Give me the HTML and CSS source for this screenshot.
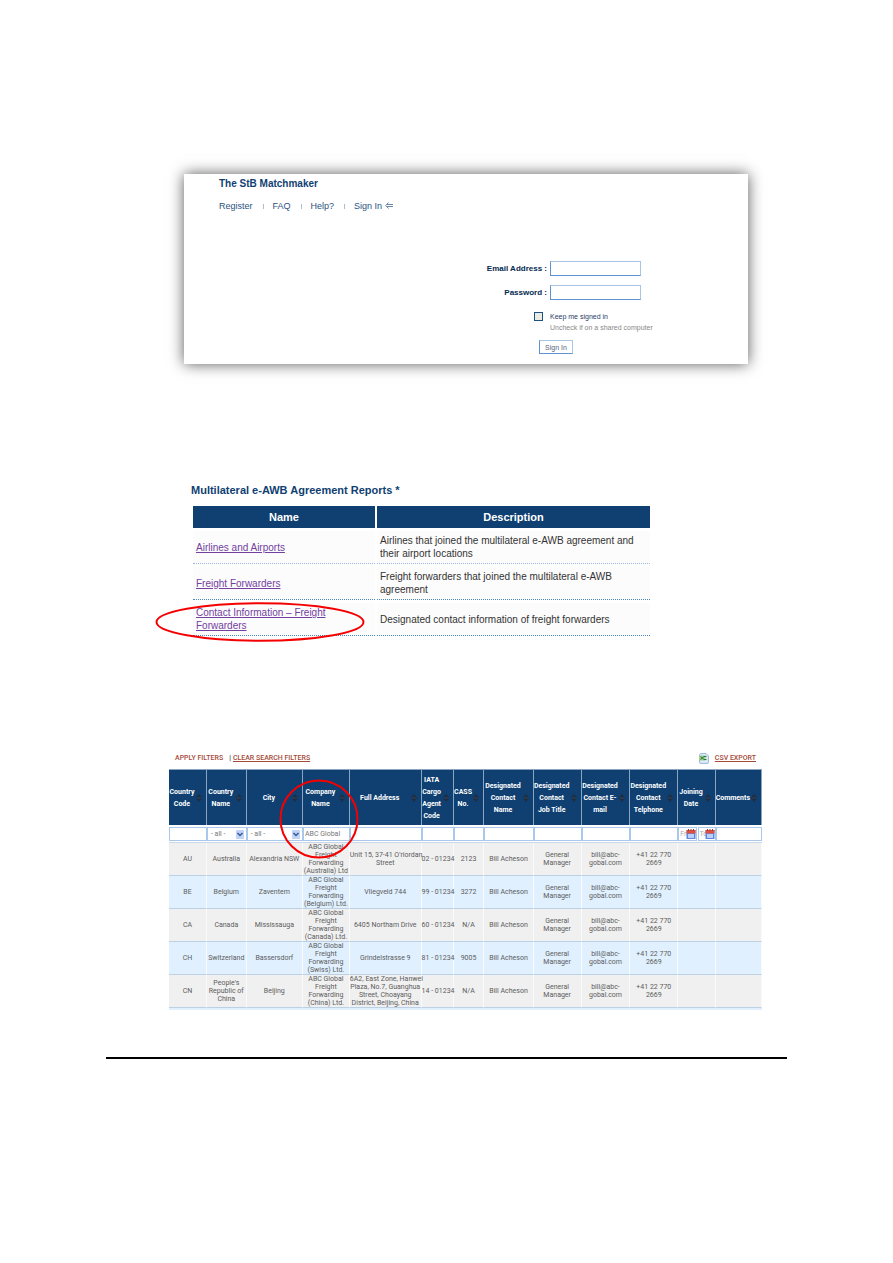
FILE: index.html
```
<!DOCTYPE html>
<html lang="en">
<head>
<meta charset="utf-8">
<title>The StB Matchmaker</title>
<link rel="stylesheet" href="styles.css">
</head>
<body>
<svg class="defs" width="0" height="0" aria-hidden="true">
  <symbol id="sort" viewBox="0 0 6 8"><path d="M3 0 6 3.500H0zM3 8 0 4.500h6z" fill="#1f2f42"/><path d="M1 3h4v2H1z" fill="#263a52"/></symbol>
  <symbol id="arrow" viewBox="0 0 8 9"><rect width="8" height="9" rx="1" fill="#bfd2f8"/><path d="M1.500 3 4 5.500 6.500 3" fill="none" stroke="#3d5a94" stroke-width="1.500"/></symbol>
  <symbol id="cal" viewBox="0 0 10 10"><rect x="0.500" y="1" width="9" height="9" fill="#5f86e0"/><rect x="0.500" y="1" width="9" height="3.500" fill="#e0503f"/><path d="M2.500 0v2M5 0v2M7.500 0v2" stroke="#9a3a3a" stroke-width="1"/><rect x="2" y="5" width="6" height="4" fill="#b9d0fa"/></symbol>
</svg>
<main class="page">
  <section class="card">
    <h1 class="brand">The StB Matchmaker</h1>
    <nav class="nav">
      <a href="#">Register</a><i class="sep"></i><a href="#">FAQ</a><i class="sep"></i><a href="#">Help?</a><i class="sep"></i><a href="#">Sign In
        <svg class="back" viewBox="0 0 8 7" aria-hidden="true"><path d="M3.500 0.500 0.700 3.500 3.500 6.500M2 2.500h6M2 4.500h6" fill="none" stroke="#47678f" stroke-width="0.800"/></svg></a>
    </nav>
    <form class="login">
      <label for="email">Email Address :</label><input class="box" id="email" type="text">
      <label for="pass">Password :</label><input class="box" id="pass" type="password">
      <input class="check" id="keep" type="checkbox">
      <div class="keep"><label for="keep">Keep me signed in</label><p>Uncheck if on a shared computer</p></div>
      <button class="signin" type="button">Sign In</button>
    </form>
  </section>

  <section class="reports">
    <h2 class="reports-title">Multilateral e-AWB Agreement Reports *</h2>
    <table class="list">
      <colgroup><col class="name"><col></colgroup>
      <thead><tr><th>Name</th><th>Description</th></tr></thead>
      <tbody>
        <tr><td><a href="#">Airlines and Airports</a></td><td>Airlines that joined the multilateral e-AWB agreement and<br>their airport locations</td></tr>
        <tr><td><a href="#">Freight Forwarders</a></td><td>Freight forwarders that joined the multilateral e-AWB<br>agreement</td></tr>
        <tr><td class="marked"><a href="#">Contact Information – Freight<br>Forwarders</a>
          <svg class="oval" viewBox="0 0 210 40" aria-hidden="true"><ellipse cx="105" cy="20" rx="103.500" ry="18.800" fill="none" stroke="#f50000" stroke-width="2"/></svg></td><td>Designated contact information of freight forwarders</td></tr>
      </tbody>
    </table>
  </section>

  <section class="contacts">
    <div class="toolbar">
      <a href="#">APPLY FILTERS</a><span class="bar">|</span><a class="under" href="#">CLEAR SEARCH FILTERS</a>
      <a class="export" href="#"><svg viewBox="0 0 10 11" aria-hidden="true"><path d="M1.500 0.500H7L9.500 3v6a1.500 1.500 0 0 1-1.500 1.500H2A1.500 1.500 0 0 1 .5 9V2z" fill="#d9e9f8" stroke="#86acd8" stroke-width="0.800"/><rect y="2.500" width="6.500" height="5" fill="#9fcf93"/><path d="M1.500 3.500l3.500 3M5 3.500l-3.500 3M5 3.500h2.500M5 6.500h2.500" stroke="#2c7a35" stroke-width="1"/></svg><span class="under">CSV EXPORT</span></a>
    </div>
    <table class="grid">
      <colgroup><col style="width:6.400%"><col style="width:6.700%"><col style="width:9.500%"><col style="width:7.900%"><col style="width:12.100%"><col style="width:5.400%"><col style="width:5.200%"><col style="width:8.300%"><col style="width:8.100%"><col style="width:8.200%"><col style="width:8.100%"><col style="width:6.300%"><col style="width:7.800%"></colgroup>
      <thead>
        <tr>
          <th>Country<br>Code<svg class="sort"><use href="#sort"/></svg></th>
          <th>Country<br>Name<svg class="sort"><use href="#sort"/></svg></th>
          <th>City<svg class="sort"><use href="#sort"/></svg></th>
          <th>Company<br>Name<svg class="sort"><use href="#sort"/></svg>
            <svg class="circle" viewBox="0 0 80 80" aria-hidden="true"><circle cx="40" cy="40" r="38.500" fill="none" stroke="#f50000" stroke-width="2"/></svg></th>
          <th>Full Address<svg class="sort"><use href="#sort"/></svg></th>
          <th>IATA<br>Cargo<br>Agent<br>Code<svg class="sort"><use href="#sort"/></svg></th>
          <th>CASS<br>No.<svg class="sort"><use href="#sort"/></svg></th>
          <th>Designated<br>Contact<br>Name<svg class="sort"><use href="#sort"/></svg></th>
          <th>Designated<br>Contact<br>Job Title<svg class="sort"><use href="#sort"/></svg></th>
          <th>Designated<br>Contact E-<br>mail<svg class="sort"><use href="#sort"/></svg></th>
          <th>Designated<br>Contact<br>Telphone<svg class="sort"><use href="#sort"/></svg></th>
          <th>Joining<br>Date<svg class="sort"><use href="#sort"/></svg></th>
          <th>Comments<svg class="sort"><use href="#sort"/></svg></th>
        </tr>
        <tr class="filters">
          <td><input type="text" aria-label="Country code"></td>
          <td><div class="pick"><select aria-label="Country name"><option>- all -</option></select><svg><use href="#arrow"/></svg></div></td>
          <td><div class="pick"><select aria-label="City"><option>- all -</option></select><svg><use href="#arrow"/></svg></div></td>
          <td><input type="text" aria-label="Company name" value="ABC Global"></td>
          <td><input type="text" aria-label="Full address"></td>
          <td><input type="text" aria-label="IATA cargo agent code"></td>
          <td><input type="text" aria-label="CASS number"></td>
          <td><input type="text" aria-label="Contact name"></td>
          <td><input type="text" aria-label="Contact job title"></td>
          <td><input type="text" aria-label="Contact e-mail"></td>
          <td><input type="text" aria-label="Contact telephone"></td>
          <td><div class="dates"><div class="date"><input type="text" aria-label="From date" placeholder="From"><svg><use href="#cal"/></svg></div><div class="date"><input type="text" aria-label="To date" placeholder="To"><svg><use href="#cal"/></svg></div></div></td>
          <td><input type="text" aria-label="Comments"></td>
        </tr>
      </thead>
      <tbody>
        <tr><td>AU</td><td>Australia</td><td>Alexandria NSW</td><td>ABC Global<br>Freight<br>Forwarding<br>(Australia) Ltd</td><td>Unit 15, 37-41 O'riordan<br>Street</td><td>02 - 01234</td><td>2123</td><td>Bill Acheson</td><td>General<br>Manager</td><td>bill@abc-<br>gobal.com</td><td>+41 22 770<br>2669</td><td></td><td></td></tr>
        <tr><td>BE</td><td>Belgium</td><td>Zaventem</td><td>ABC Global<br>Freight<br>Forwarding<br>(Belgium) Ltd.</td><td>Vliegveld 744</td><td>99 - 01234</td><td>3272</td><td>Bill Acheson</td><td>General<br>Manager</td><td>bill@abc-<br>gobal.com</td><td>+41 22 770<br>2669</td><td></td><td></td></tr>
        <tr><td>CA</td><td>Canada</td><td>Mississauga</td><td>ABC Global<br>Freight<br>Forwarding<br>(Canada) Ltd.</td><td>6405 Northam Drive</td><td>60 - 01234</td><td>N/A</td><td>Bill Acheson</td><td>General<br>Manager</td><td>bill@abc-<br>gobal.com</td><td>+41 22 770<br>2669</td><td></td><td></td></tr>
        <tr><td>CH</td><td>Switzerland</td><td>Bassersdorf</td><td>ABC Global<br>Freight<br>Forwarding<br>(Swiss) Ltd.</td><td>Grindelstrasse 9</td><td>81 - 01234</td><td>9005</td><td>Bill Acheson</td><td>General<br>Manager</td><td>bill@abc-<br>gobal.com</td><td>+41 22 770<br>2669</td><td></td><td></td></tr>
        <tr><td>CN</td><td>People's<br>Republic of<br>China</td><td>Beijing</td><td>ABC Global<br>Freight<br>Forwarding<br>(China) Ltd.</td><td>6A2, East Zone, Hanwei<br>Plaza, No.7, Guanghua<br>Street, Choayang<br>District, Beijing, China</td><td>14 - 01234</td><td>N/A</td><td>Bill Acheson</td><td>General<br>Manager</td><td>bill@abc-<br>gobal.com</td><td>+41 22 770<br>2669</td><td></td><td></td></tr>
      </tbody>
    </table>
  </section>
  <hr class="rule">
</main>
</body>
</html>
```
FILE: styles.css
```
* { box-sizing: border-box; }
body { margin: 0; background: #fff; color: #333; font-family: "Liberation Sans", Arial, sans-serif; }
h1, h2, p { margin: 0; }
input, select, button { font-family: inherit; margin: 0; }
.defs { position: absolute; }
.page { display: flex; flex-direction: column; padding: 174px 106px; }

.card { margin: 0 39px 0 78px; padding: 3px 35px 10px; background: #fff; box-shadow: 0 0 14px rgba(0, 0, 0, 0.65); }
.brand { color: #103f72; font-size: 10px; line-height: 13px; }
.nav { display: flex; align-items: center; margin-top: 9px; font-size: 9px; line-height: 14px; }
.nav a { color: #2c527f; text-decoration: none; }
.sep { width: 1px; height: 5px; margin: 0 8px 0 10px; background: #b0bfd0; }
.back { width: 8px; height: 7px; }
.login { display: grid; grid-template-columns: 328px 1fr; column-gap: 3px; align-items: center; margin-top: 48px; font-size: 8px; }
.login > label { justify-self: end; margin-bottom: 9px; color: #05294f; font-weight: bold; line-height: 15px; }
.box { width: 91px; height: 15px; margin-bottom: 9px; padding: 0 3px; border: 1px solid #a9c5e3; border-left-color: #5c93d0; border-bottom-color: #5c93d0; font-size: 8px; }
.check { appearance: none; justify-self: end; align-self: start; width: 9px; height: 9px; margin: 3px 4px 0 0; border: 1px solid #1c5180; background: #ebebe4; }
.keep { margin-top: 2px; font-size: 7px; line-height: 11px; color: #888; }
.keep label { color: #1f4068; }
.signin { grid-column: 1 / -1; width: 34px; height: 14px; margin: 7px 0 0 320px; padding: 0; border: 1px solid #a9c5e3; border-left-color: #5c93d0; border-bottom-color: #5c93d0; background: #fff; color: #56677c; font-size: 7px; }
.nav .sep + a { margin-left: 1px; }

.reports { margin: 119px 135px 0 85px; }
.reports-title { color: #103f72; font-size: 11px; line-height: 15px; }
.list { width: 100%; margin-top: 5px; table-layout: fixed; border-collapse: separate; border-spacing: 2px 3px; font-size: 10px; line-height: 13px; }
.list .name { width: 40%; }
.list th { height: 22px; padding: 0; background: #103f72; color: #fff; font-size: 11px; }
.list td { height: 33px; padding: 0 3px; background: #fcfcfc; border-bottom: 1px dotted #4a86c0; white-space: nowrap; }
.list tbody tr:first-child td { border-bottom-color: #9bb8dc; }
.list a { color: #7340a0; }
.marked { position: relative; }
.oval { position: absolute; left: -38px; top: -1px; width: 210px; height: 40px; }

.contacts { margin: 111px 25px 0 63px; font-family: Roboto, "Liberation Sans", sans-serif; font-size: 7px; }
.toolbar { display: flex; align-items: center; height: 16px; padding: 0 6px; font-weight: 500; }
.toolbar a { color: #a44a3a; text-decoration: none; }
.toolbar .under { text-decoration: underline; }
.bar { margin: 0 2px 0 6px; }
.toolbar .export { display: flex; align-items: center; gap: 6px; margin-left: auto; }
.export svg { width: 10px; height: 11px; }
.grid { width: 100%; margin-top: 3px; table-layout: fixed; border-collapse: separate; border-spacing: 0; line-height: 8px; text-align: center; white-space: nowrap; border-bottom: 2px solid #e0f0ff; }
.grid th, .grid td { padding: 0; }
.grid th { position: relative; height: 56px; padding-right: 11px; border-right: 1px solid #8ba4c0; border-top: 1px solid #8ba4c0; background: #103f72; color: #fff; line-height: 12px; }
.sort { position: absolute; right: 4px; top: 24px; width: 6px; height: 8px; }
.circle { position: absolute; z-index: 1; left: -24px; top: 9px; width: 80px; height: 80px; }
.filters td { height: 18px; border-bottom: 1px solid #c9d9e9; }
.filters input, .filters select { display: block; width: 100%; height: 14px; padding: 0 1px; border: 1px solid #a9c8ea; border-radius: 0; background: #fff; color: #777; font-size: 7px; }
.pick, .date { position: relative; }
.pick select { appearance: none; padding-left: 3px; }
.pick svg { position: absolute; right: 3px; top: 3px; width: 8px; height: 9px; }
.dates { display: grid; grid-template-columns: 1fr 1fr; gap: 1px; }
.date svg { position: absolute; right: 1px; top: 2px; width: 10px; height: 10px; }
.date input::placeholder { color: #aaa; }
.grid tbody td { height: 33px; background: #f0f0f0; color: #5c5c5c; border-right: 1px solid #fafafa; border-bottom: 1px solid #bcd0e6; }
.grid tbody tr:nth-child(even) td { background: #e0f0ff; }

.rule { width: 100%; height: 2px; margin: 47px 0 0; border: 0; background: #000; }
```
